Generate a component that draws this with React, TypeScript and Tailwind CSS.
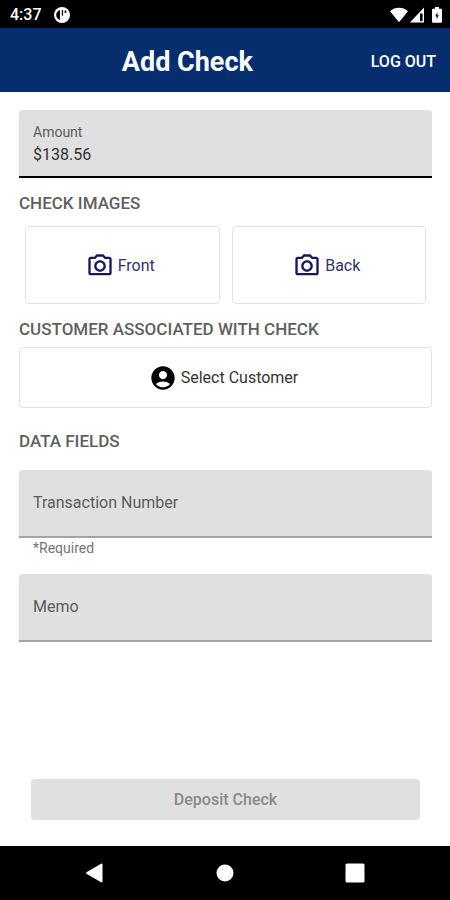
import { useState } from 'react';
import type { ReactNode } from 'react';
import { MdAccountCircle, MdOutlinePhotoCamera } from 'react-icons/md';
import { clsx } from 'clsx';

interface FilledFieldProps {
  id: string;
  label: string;
  initialValue?: string;
  helperText?: string;
}

function StatusBar() {
  return (
    <div className="flex h-7 items-center justify-between bg-black pt-0.5 pr-2 pl-2.5 text-white">
      <div className="flex items-center gap-3">
        <span className="text-base font-medium">4:37</span>
        <svg className="h-4 w-4" viewBox="0 0 16 16" aria-hidden="true">
          <circle cx="8" cy="8" r="8" fill="white" />
          <path
            d="M6 3v10C3.6 12.300 2.200 10.300 2.200 8S3.600 3.700 6 3z"
            fill="black"
          />
          <path d="M7.800 3h1.300v5.600H7.800z" fill="black" />
          <path d="M10.600 3.600h1.800v2.200h-1.800z" fill="black" />
        </svg>
      </div>
      <div className="flex items-center">
        <svg className="h-4 w-[18px]" viewBox="0 0 18 16" aria-hidden="true">
          <path d="M0 4.2C5-.4 13-.4 18 4.2L9 15.2z" fill="white" />
        </svg>
        <svg className="ml-0.5 h-4 w-3.5" viewBox="0 0 14 16" aria-hidden="true">
          <path d="M14 .5V15.5H0z" fill="white" />
          <path d="M10 6.5h2.6v7.6H10z" fill="black" />
        </svg>
        <svg className="ml-2 h-4 w-2.5" viewBox="0 0 10 16" aria-hidden="true">
          <path
            d="M3 0h4v1.8h2a1 1 0 0 1 1 1V14.8a1 1 0 0 1-1 1H1a1 1 0 0 1-1-1V2.8a1 1 0 0 1 1-1h2z"
            fill="white"
          />
          <path d="M5.4 5.200L3.200 9.200h1.400v3L6.800 8.200H5.400z" fill="black" />
        </svg>
      </div>
    </div>
  );
}

function FilledField({ id, label, initialValue = '', helperText }: FilledFieldProps) {
  const [value, setValue] = useState(initialValue);
  const [focused, setFocused] = useState(false);
  const floated = focused || value !== '';

  return (
    <div>
      <div
        className={clsx(
          'grid h-[68px] rounded-t border-b-2 bg-[#e0e0e0]',
          floated ? 'border-black' : 'border-[#a3a3a3]'
        )}
      >
        <label
          htmlFor={id}
          className={clsx(
            'pointer-events-none col-start-1 row-start-1 px-3.5 text-[#5c5c5c]',
            floated ? 'pt-3 text-sm' : 'self-center text-base'
          )}
        >
          {label}
        </label>
        <input
          id={id}
          type="text"
          value={value}
          onChange={(e) => setValue(e.target.value)}
          onFocus={() => setFocused(true)}
          onBlur={() => setFocused(false)}
          className="col-start-1 row-start-1 w-full bg-transparent px-3.5 pt-6 text-base text-[#333333] outline-none"
        />
      </div>
      {helperText && (
        <p className="px-3.5 text-sm text-[#757575]">{helperText}</p>
      )}
    </div>
  );
}

function SectionTitle({ children }: { children: ReactNode }) {
  return <h2 className="text-[17px] leading-[26px] font-medium text-[#5f5f5f]">{children}</h2>;
}

function ImageButton({ label }: { label: string }) {
  return (
    <button
      type="button"
      className="flex h-[78px] flex-1 items-center justify-center gap-1 rounded border border-[#e2e2e2] pt-0.5 pr-1 text-base text-[#32326e]"
    >
      <MdOutlinePhotoCamera className="h-7 w-7 text-[#17175c]" />
      {label}
    </button>
  );
}

function NavigationBar() {
  return (
    <nav className="flex h-[54px] items-center justify-around bg-black px-[30px]">
      <button type="button" aria-label="Back">
        <svg className="h-5 w-5" viewBox="0 0 20 20">
          <path
            d="M1.5 9.2L16 .7a1 1 0 0 1 1.5.9v16.8a1 1 0 0 1-1.5.9L1.5 10.8a1 1 0 0 1 0-1.6z"
            fill="white"
          />
        </svg>
      </button>
      <button type="button" aria-label="Home">
        <svg className="h-5 w-5" viewBox="0 0 20 20">
          <circle cx="10" cy="10" r="8.5" fill="white" />
        </svg>
      </button>
      <button type="button" aria-label="Recent apps">
        <svg className="h-5 w-5" viewBox="0 0 20 20">
          <rect x=".5" y=".5" width="19" height="19" rx="1.5" fill="white" />
        </svg>
      </button>
    </nav>
  );
}

export default function App() {
  return (
    <div className="flex min-h-screen flex-col bg-white font-['Roboto',sans-serif]">
      <StatusBar />

      {/* Header */}
      <header className="flex h-16 items-center bg-[#062e6f] px-3.5 pt-1 text-white">
        <h1 className="flex-1 pr-2.5 text-center text-[27px] leading-8 font-bold">
          Add Check
        </h1>
        <button type="button" className="text-base font-medium">
          LOG OUT
        </button>
      </header>

      <main className="flex flex-1 flex-col pt-[18px] pr-[18px] pb-[26px] pl-[19px]">
        <FilledField id="amount" label="Amount" initialValue="$138.56" />

        {/* Check images */}
        <section className="mt-3">
          <SectionTitle>CHECK IMAGES</SectionTitle>
          <div className="mt-2.5 flex gap-3 px-1.5">
            <ImageButton label="Front" />
            <ImageButton label="Back" />
          </div>
        </section>

        {/* Customer */}
        <section className="mt-3">
          <SectionTitle>CUSTOMER ASSOCIATED WITH CHECK</SectionTitle>
          <button
            type="button"
            className="mt-[5px] flex h-[61px] w-full items-center justify-center gap-1 rounded border border-[#e2e2e2] pr-1 text-base text-[#333333]"
          >
            <MdAccountCircle className="h-7 w-7 text-black" />
            Select Customer
          </button>
        </section>

        {/* Data fields */}
        <section className="mt-5">
          <SectionTitle>DATA FIELDS</SectionTitle>
          <div className="mt-4 flex flex-col gap-4">
            <FilledField
              id="transaction-number"
              label="Transaction Number"
              helperText="*Required"
            />
            <FilledField id="memo" label="Memo" />
          </div>
        </section>

        <div className="mt-auto px-3">
          <button
            type="button"
            disabled
            className="h-[41px] w-full rounded bg-[#e0e0e0] text-base font-medium text-[#8a8a8a]"
          >
            Deposit Check
          </button>
        </div>
      </main>

      <NavigationBar />
    </div>
  );
}
